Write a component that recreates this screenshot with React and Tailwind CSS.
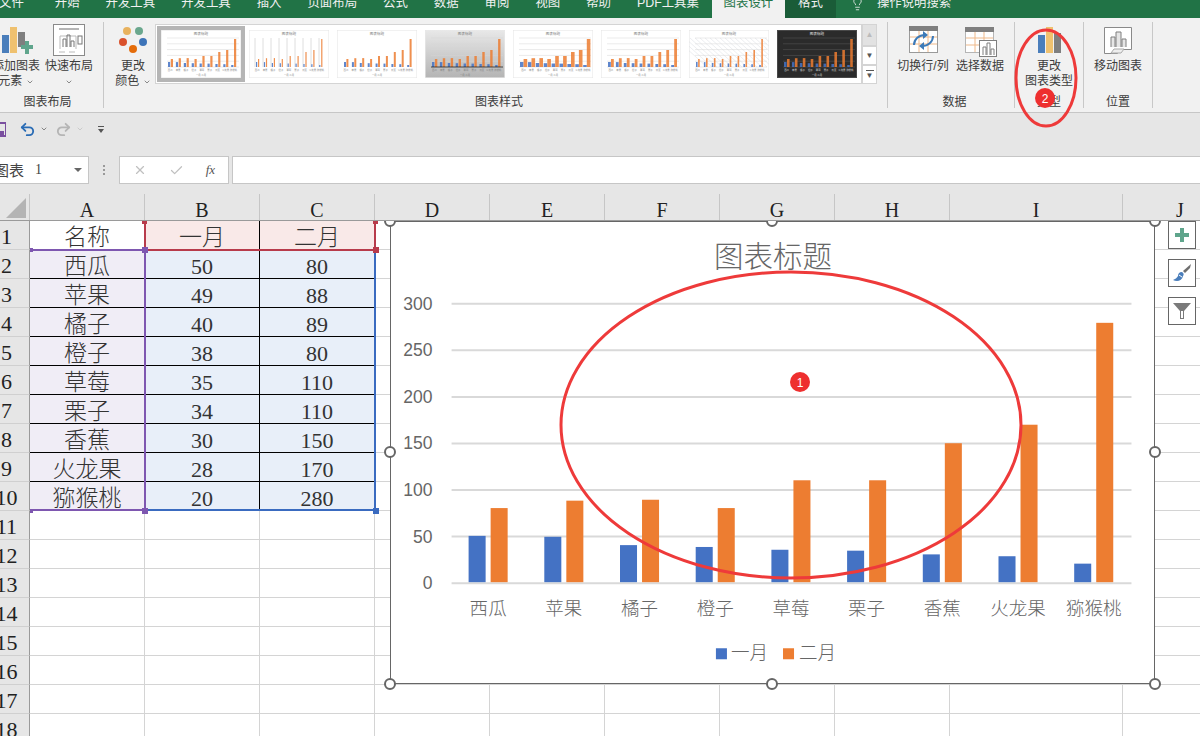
import React from 'react';
import { Lightbulb, Undo2, Redo2, X, Check, ChevronDown } from 'lucide-react';

const sans = "font-['Liberation_Sans','Noto_Sans_CJK_SC',sans-serif]";

const rows = [
  ['西瓜', 50, 80],
  ['苹果', 49, 88],
  ['橘子', 40, 89],
  ['橙子', 38, 80],
  ['草莓', 35, 110],
  ['栗子', 34, 110],
  ['香蕉', 30, 150],
  ['火龙果', 28, 170],
  ['猕猴桃', 20, 280],
];

const columns = [
  ['A', 115], ['B', 115], ['C', 115], ['D', 115], ['E', 115],
  ['F', 115], ['G', 115], ['H', 115], ['I', 173], ['J', 115],
];

const tabs = ['开始', '开发工具', '开发工具', '插入', '页面布局', '公式', '数据', '审阅', '视图', '帮助', 'PDF工具集'];

const thumbs = [
  { selected: true, bar: 2.2, pad: 0.6, grid: 'h' },
  { bar: 1.2, pad: 0.8, grid: 'v' },
  { bar: 2, pad: 0.4, grid: 'none' },
  { bar: 2.4, pad: 0.5, grid: 'h', bg: 'grey' },
  { bar: 3.6, pad: 0, grid: 'h' },
  { bar: 2.8, pad: 0.2, grid: 'h' },
  { bar: 1.6, pad: 0.5, grid: 'hatch' },
  { bar: 2.6, pad: 0.4, grid: 'h', bg: 'dark' },
];

const MiniChart = ({ selected, bar, pad, grid, bg, idx }) => {
  const dark = bg === 'dark';
  const text = dark ? '#e5e5e5' : '#7a7a7a';
  const line = dark ? '#5b5b5b' : '#d6d6d6';
  const fill = dark ? '#2b2b2b' : bg === 'grey' ? `url(#thumb-bg-${idx})` : '#ffffff';
  return (
    <div className={`h-[56px] w-[88px] shrink-0 border-4 ${selected ? 'border-[#b5b5b5]' : 'border-transparent'}`}>
      <svg viewBox="0 0 80 48" className="h-full w-full">
        <defs>
          <linearGradient id={`thumb-bg-${idx}`} x1="0" y1="0" x2="0" y2="1">
            <stop offset="0" stopColor="#e8e8e8" />
            <stop offset="1" stopColor="#b4b4b4" />
          </linearGradient>
        </defs>
        <rect x="0.25" y="0.25" width="79.5" height="47.5" fill={fill} stroke={dark ? '#333' : '#e4e4e4'} strokeWidth="0.5" />
        <text x="40" y="5" fontSize="3.6" textAnchor="middle" fill={text} className={sans}>图表标题</text>
        {grid === 'hatch' && (
          <g stroke="#cfd5dc" strokeWidth="0.4">
            {Array.from({ length: 20 }).map((_, i) => (
              <line key={i} x1={i * 5 - 14} y1="8" x2={i * 5 + 18} y2="37" />
            ))}
          </g>
        )}
        {(grid === 'h' || grid === 'hatch') && [8, 13.8, 19.6, 25.4, 31.2, 37].map((y) => (
          <line key={y} x1="6" x2="78" y1={y} y2={y} stroke={line} strokeWidth="0.5" />
        ))}
        {grid === 'v' && rows.map((_, i) => (
          <line key={i} x1={6 + i * 8} x2={6 + i * 8} y1="8" y2="37" stroke={line} strokeWidth="0.8" />
        ))}
        {rows.map((r, i) => {
          const x = 7 + i * 7.9;
          return (
            <g key={r[0]} opacity="0.85">
              <rect x={x} y={37 - r[1] * 0.1} width={bar} height={r[1] * 0.1} fill="#4472c4" />
              <rect x={x + bar + pad} y={37 - r[2] * 0.1} width={bar} height={r[2] * 0.1} fill="#ed7d31" />
              <text x={x + bar} y="41" fontSize="2.4" textAnchor="middle" fill={text} className={sans}>{r[0]}</text>
            </g>
          );
        })}
        {bg === 'grey' && <line x1="6" x2="78" y1="37" y2="37" stroke="#222" strokeWidth="0.8" />}
        <text x="40" y="46" fontSize="2.4" textAnchor="middle" fill={text} className={sans}>一月 二月</text>
      </svg>
    </div>
  );
};

const Caret = ({ className = '' }) => <ChevronDown size={8} strokeWidth={2} className={`inline-block text-[#555] ${className}`} />;

const AddElementIcon = () => (
  <svg width="36" height="36" viewBox="0 0 36 36">
    <rect x="4" y="13" width="7" height="18" fill="#4a7ebb" />
    <rect x="12" y="5" width="7" height="26" fill="#efc16f" />
    <rect x="20" y="10" width="7" height="15" fill="#7f7f7f" />
    <path d="M23 23h4v-4h4v4h4v4h-4v5h-4v-5h-4z" fill="#5fa58c" />
  </svg>
);

const QuickLayoutIcon = () => (
  <svg width="36" height="36" viewBox="0 0 36 36" fill="none">
    <rect x="2.5" y="2.5" width="31" height="31" fill="#fff" stroke="#8a8a8a" />
    <path d="M8 7h20" stroke="#b5b5b5" strokeWidth="2" />
    <path d="M9 27V14h16v13" stroke="#bbb" />
    <path d="M12 25v-8h3v8M16 25V13h3v12M20 25v-6h3v6" stroke="#777" />
    <rect x="27" y="14" width="4" height="8" stroke="#777" />
    <path d="M8 30h6M18 30h6" stroke="#bbb" />
  </svg>
);

const ColorIcon = () => (
  <svg width="36" height="36" viewBox="0 0 36 36">
    <circle cx="12" cy="9" r="4" fill="#e8b25e" />
    <circle cx="24" cy="9" r="4" fill="#6aa78d" />
    <circle cx="8" cy="20" r="4" fill="#d9512c" />
    <circle cx="28" cy="20" r="4" fill="#3d74b8" />
    <circle cx="18" cy="27" r="4" fill="#e46c0a" />
  </svg>
);

const SwitchIcon = () => (
  <svg width="36" height="36" viewBox="0 0 36 36" fill="none">
    <rect x="4.5" y="4.5" width="28" height="26" fill="#fff" stroke="#9a9a9a" />
    <rect x="4" y="4" width="29" height="5" fill="#7f7f7f" />
    <path d="M5 15h27M5 22h27M14 9v21M23 9v21" stroke="#efb98a" />
    <path d="M9 23c0-6 5-10 11-10" stroke="#3d7ab8" strokeWidth="2" />
    <path d="M18 9l5 4-5 4z" fill="#3d7ab8" />
    <path d="M28 14c0 6-5 10-11 10" stroke="#3d7ab8" strokeWidth="2" />
    <path d="M19 20l-5 4 5 4z" fill="#3d7ab8" />
  </svg>
);

const SelectDataIcon = () => (
  <svg width="36" height="36" viewBox="0 0 36 36" fill="none">
    <rect x="3.5" y="5.5" width="28" height="25" fill="#fff" stroke="#b5b5b5" />
    <rect x="3" y="5" width="29" height="5" fill="#7f7f7f" />
    <path d="M4 16h27M4 23h27M13 10v20M22 10v20" stroke="#efb98a" />
    <rect x="17.5" y="18.5" width="17" height="16" fill="#fff" stroke="#7f7f7f" />
    <path d="M21 33v-8h3v8M25 33V21h3v12M29 33v-6h3v6" stroke="#7f7f7f" />
  </svg>
);

const ChartTypeIcon = () => (
  <svg width="36" height="36" viewBox="0 0 36 36">
    <rect x="7" y="13" width="7" height="18" fill="#4a7ebb" />
    <rect x="15" y="5" width="7" height="26" fill="#efc16f" />
    <rect x="23" y="11" width="7" height="20" fill="#7f7f7f" />
  </svg>
);

const MoveIcon = () => (
  <svg width="36" height="36" viewBox="0 0 36 36" fill="none">
    <path d="M4.5 5.5h27v22h-10l-4 4h-13z" fill="#fff" stroke="#8a8a8a" />
    <path d="M11 25v-10h4v10M16 25V10h5v15M22 25v-8h4v8" stroke="#7f7f7f" fill="#e6e6e6" />
    <path d="M11 31l3-4h10l-3 4z" fill="#eee" stroke="#aaa" />
  </svg>
);

const RibbonButton = ({ icon, lines, width }) => (
  <div className={`flex shrink-0 flex-col items-center ${width}`}>
    <div className="flex h-[37px] items-start justify-center">{icon}</div>
    {lines.map((l, i) => (
      <div key={i} className="h-[15px] whitespace-nowrap text-[12px] leading-[15px] text-[#3c3c3c]">{l}</div>
    ))}
  </div>
);

const RibbonGroup = ({ label, className, children }) => (
  <div className={`flex h-[86px] shrink-0 flex-col border-r border-[#c8c8c8] ${className}`}>
    <div className="flex flex-1">{children}</div>
    <div className="h-[15px] text-center text-[12px] leading-[19px] text-[#3c3c3c]">{label}</div>
  </div>
);

const ScrollBtn = ({ className, children }) => (
  <div className={`flex w-[15px] items-center justify-center border border-[#d4d4d4] text-[8px] leading-none ${className}`}>{children}</div>
);

const Handle = ({ className }) => (
  <div className={`absolute h-[12px] w-[12px] -translate-x-1/2 -translate-y-1/2 rounded-full border-2 border-[#666] bg-white ${className}`} />
);

const SideButton = ({ children }) => (
  <div className="flex h-[28px] w-[28px] items-center justify-center border border-[#666] bg-white">{children}</div>
);

const Chart = () => {
  const grid = [[300, 304], [250, 350.5], [200, 397], [150, 443.5], [100, 490], [50, 536.5], [0, 583]];
  return (
    <svg viewBox="391.5 222.5 762 460" className={`block h-full w-full font-light ${sans}`}>
      <text x="773" y="267" fontSize="29.5" textAnchor="middle" fill="#666">图表标题</text>
      {grid.map(([v, y]) => (
        <g key={v}>
          <line x1="452" x2="1131" y1={y} y2={y} stroke="#d9d9d9" strokeWidth="2" />
          <text x="433" y={y + 6} fontSize="17.5" textAnchor="end" fill="#666">{v}</text>
        </g>
      ))}
      {rows.map((r, i) => {
        const x = 469 + i * 75.6;
        return (
          <g key={r[0]}>
            <rect x={x} y={582 - r[1] * 0.925} width="17" height={r[1] * 0.925} fill="#4472c4" />
            <rect x={x + 22} y={582 - r[2] * 0.925} width="17" height={r[2] * 0.925} fill="#ed7d31" />
            <text x={x + 19.5} y="615" fontSize="18.5" textAnchor="middle" fill="#666">{r[0]}</text>
          </g>
        );
      })}
      <rect x="716" y="648" width="11" height="11" fill="#4472c4" />
      <text x="731" y="659" fontSize="18.5" fill="#666">一月</text>
      <rect x="783" y="648" width="11" height="11" fill="#ed7d31" />
      <text x="799" y="659" fontSize="18.5" fill="#666">二月</text>
    </svg>
  );
};

const Cell = ({ r, c, width }) => {
  const data = r >= 2 && r <= 10 ? rows[r - 2] : null;
  let value = '';
  let bg = 'bg-white';
  let border = 'border-[#d4d4d4]';
  if (r === 1 && c < 3) {
    value = ['名称', '一月', '二月'][c];
    if (c > 0) bg = 'bg-[#f9e9e8]';
  } else if (data && c < 3) {
    value = data[c];
    bg = c === 0 ? 'bg-[#f0edf6]' : 'bg-[#e8eff9]';
  }
  if (c < 3 && r >= 1 && r <= 9) border = r === 1 ? 'border-b-[#d4d4d4] border-r-[#d4d4d4]' : 'border-b-black border-r-[#d4d4d4]';
  const blackRight = c === 1 && r <= 10 ? 'border-r-black' : '';
  const size = typeof value === 'string' ? 'text-[23px]' : 'text-[22px]';
  return (
    <div
      className={`flex h-[29px] shrink-0 items-end justify-center overflow-hidden border-r border-b font-light leading-[22px] text-[#333] ${size} ${bg} ${border} ${blackRight}`}
      style={{ width }}
    >
      {value}
    </div>
  );
};

const App = () => (
  <div className={`relative h-[736px] w-[1200px] overflow-hidden bg-[#e6e6e6] ${sans}`}>
    {/* tabs */}
    <div className="flex h-[18px] items-center overflow-hidden bg-[#217346] text-[12.4px] text-[#f1f1f1]">
      <div className="-ml-[1px] pr-[18px]"><span className="block -translate-y-[6px]">文件</span></div>
      {tabs.map((t, i) => (
        <div key={i} className="px-[13px]"><span className="block -translate-y-[6px] whitespace-nowrap">{t}</span></div>
      ))}
      <div className="flex h-full w-[73px] items-center justify-center bg-[#f1f1f1] text-[#217346]"><span className="block -translate-y-[6px]">图表设计</span></div>
      <div className="flex h-full w-[51px] items-center justify-center bg-[#1a5c38]"><span className="block -translate-y-[6px]">格式</span></div>
      <Lightbulb size={15} strokeWidth={1.3} className="ml-[14px] -translate-y-[6px]" />
      <span className="ml-[12px] block -translate-y-[6px]">操作说明搜索</span>
    </div>

    {/* ribbon */}
    <div className="flex h-[95px] items-start border-b border-[#c6c6c6] bg-[#f1f1f1] pt-[4px]">
      <RibbonGroup label="图表布局" className="-ml-[8px] w-[112px]">
        <div className="flex gap-[5px]">
          <RibbonButton width="w-[48px]" icon={<AddElementIcon />} lines={['添加图表', <span key="a">元素 <Caret /></span>]} />
          <RibbonButton width="w-[48px]" icon={<QuickLayoutIcon />} lines={['快速布局', <Caret key="b" />]} />
        </div>
      </RibbonGroup>
      <RibbonGroup label="图表样式" className="w-[784px] pl-[7px]">
        <RibbonButton width="w-[44px]" icon={<ColorIcon />} lines={['更改', <span key="c">颜色 <Caret /></span>]} />
        <div className="mt-[2px] flex h-[60px]">
          <div className="flex h-full w-[707px] items-center border border-[#d4d4d4] bg-white pl-[1px]">
            {thumbs.map((t, i) => <MiniChart key={i} idx={i} {...t} />)}
          </div>
          <div className="flex flex-col">
            <ScrollBtn className="h-[22px] bg-[#e2e2e2] text-[#bbb]">▲</ScrollBtn>
            <ScrollBtn className="h-[19px] bg-white text-[#555]">▼</ScrollBtn>
            <ScrollBtn className="h-[19px] bg-white text-[#555]">
              <div className="flex flex-col items-center gap-[1px]"><div className="h-px w-[8px] bg-[#555]" /><span>▼</span></div>
            </ScrollBtn>
          </div>
        </div>
      </RibbonGroup>
      <RibbonGroup label="数据" className="w-[127px] pl-[7px]">
        <div className="flex gap-[4px]">
          <RibbonButton width="w-[56px]" icon={<SwitchIcon />} lines={['切换行/列']} />
          <RibbonButton width="w-[50px]" icon={<SelectDataIcon />} lines={['选择数据']} />
        </div>
      </RibbonGroup>
      <RibbonGroup label="类型" className="w-[69px]">
        <RibbonButton width="w-full" icon={<ChartTypeIcon />} lines={['更改', '图表类型']} />
      </RibbonGroup>
      <RibbonGroup label="位置" className="w-[69px]">
        <RibbonButton width="w-full" icon={<MoveIcon />} lines={['移动图表']} />
      </RibbonGroup>
    </div>

    {/* quick access */}
    <div className="flex h-[43px] items-center bg-[#e6e6e6] pb-[11px]">
      <svg width="6" height="15" viewBox="0 0 6 15" className="shrink-0">
        <path d="M-8 1h14v13H-8z" fill="none" stroke="#7a4f9f" strokeWidth="2" />
        <rect x="0" y="9" width="4" height="5" fill="#7a4f9f" />
      </svg>
      <Undo2 size={17} strokeWidth={2.6} className="ml-[13px] text-[#2a6cb5]" />
      <Caret className="ml-[4px]" />
      <Redo2 size={17} strokeWidth={2.6} className="ml-[7px] text-[#b5b5b5]" />
      <Caret className="ml-[4px] text-[#bbb]" />
      <div className="ml-[14px] flex flex-col items-center gap-[2px]">
        <div className="h-px w-[6px] bg-[#555]" />
        <div className="h-0 w-0 border-x-[3px] border-t-[4px] border-x-transparent border-t-[#555]" />
      </div>
    </div>

    {/* formula bar */}
    <div className="flex h-[28px] items-stretch bg-[#e6e6e6]">
      <div className="flex w-[89px] items-center border border-l-0 border-[#c6c6c6] bg-white text-[15px] leading-none text-[#444]">
        <span className="-ml-[6px] whitespace-nowrap">图表</span>
        <span className="ml-[11px] font-['Liberation_Serif',serif] text-[14px]">1</span>
        <div className="ml-auto mr-[6px] h-0 w-0 border-x-[4px] border-t-[4px] border-x-transparent border-t-[#666]" />
      </div>
      <div className="flex w-[30px] flex-col items-center justify-center gap-[2px]">
        <div className="h-[2px] w-[2px] bg-[#999]" />
        <div className="h-[2px] w-[2px] bg-[#999]" />
        <div className="h-[2px] w-[2px] bg-[#999]" />
      </div>
      <div className="flex w-[110px] items-center justify-around border border-[#c6c6c6] bg-white px-[2px]">
        <X size={14} className="text-[#c0c0c0]" />
        <Check size={15} className="text-[#c0c0c0]" />
        <span className="font-['Liberation_Serif',serif] text-[13px] italic text-[#555]">fx</span>
      </div>
      <div className="ml-[3px] flex-1 border border-r-0 border-[#c6c6c6] bg-white" />
    </div>

    {/* column headers */}
    <div className="mt-[10px] flex h-[27px] overflow-hidden border-b border-[#9a9a9a] bg-[#e6e6e6] font-['Liberation_Serif',serif] text-[20px] leading-[32px] text-[#222]">
      <div className="relative w-[30px] shrink-0 border-r border-[#c6c6c6]">
        <div className="absolute bottom-[2px] right-[3px] h-0 w-0 border-b-[20px] border-l-[20px] border-b-[#b4b4b4] border-l-transparent" />
      </div>
      {columns.map(([name, w]) => (
        <div key={name} className="shrink-0 border-r border-[#c6c6c6] text-center" style={{ width: w }}>{name}</div>
      ))}
    </div>

    {/* sheet */}
    <div className="relative h-[515px] overflow-hidden bg-white font-['Liberation_Serif','Noto_Sans_CJK_SC',serif]">
      {Array.from({ length: 18 }).map((_, i) => (
        <div key={i} className="flex">
          <div className="flex h-[29px] w-[30px] shrink-0 items-end justify-center overflow-hidden border-r border-b border-r-[#9a9a9a] border-b-[#d0d0d0] bg-[#e6e6e6] pr-[16px] text-[22px] leading-[24px] text-[#222]">
            {i + 1}
          </div>
          {columns.map(([name, w], c) => (
            <Cell key={name} r={i + 1} c={c} width={w} />
          ))}
        </div>
      ))}

      {/* selection ranges */}
      <div className="absolute left-[144px] top-0 h-[30px] w-[232px] border-x-2 border-b-2 border-[#b83b4b]" />
      <div className="absolute left-[30px] top-[28px] h-[262px] w-[116px] border-y-2 border-r-2 border-[#7e57b0]" />
      <div className="absolute left-[146px] top-[29px] h-[261px] w-[230px] border-r-2 border-b-2 border-[#3a6bc0]" />
      <div className="absolute left-[142px] top-[26px] h-[6px] w-[6px] bg-[#7e57b0]" />
      <div className="absolute left-[373px] top-[26px] h-[6px] w-[6px] bg-[#b83b4b]" />
      <div className="absolute left-[142px] top-[287px] h-[6px] w-[6px] bg-[#7e57b0]" />
      <div className="absolute left-[373px] top-[287px] h-[6px] w-[6px] bg-[#3a6bc0]" />
      <div className="absolute left-[30px] top-[27px] h-[4px] w-[3px] bg-[#7e57b0]" />
      <div className="absolute left-[30px] top-[288px] h-[4px] w-[3px] bg-[#7e57b0]" />
      <div className="absolute left-[142px] top-0 h-[3px] w-[5px] bg-[#b83b4b]" />
      <div className="absolute left-[373px] top-0 h-[3px] w-[5px] bg-[#b83b4b]" />

      {/* chart */}
      <div className={`absolute left-[390px] top-0 h-[463px] w-[765px] border-[1.5px] border-[#666] bg-white ${sans}`}>
        <Chart />
      </div>
      <Handle className="left-[390px] top-0" />
      <Handle className="left-[772px] top-0" />
      <Handle className="left-[1155px] top-0" />
      <Handle className="left-[390px] top-[231px]" />
      <Handle className="left-[1155px] top-[231px]" />
      <Handle className="left-[390px] top-[463px]" />
      <Handle className="left-[772px] top-[463px]" />
      <Handle className="left-[1155px] top-[463px]" />

      <div className="absolute left-[1168px] top-0 flex flex-col gap-[10px]">
        <SideButton>
          <svg width="16" height="16" viewBox="0 0 16 16"><path d="M6 1h4v5h5v4h-5v5H6v-5H1V6h5z" fill="#5fa58c" /></svg>
        </SideButton>
        <SideButton>
          <svg width="20" height="20" viewBox="0 0 20 20">
            <path d="M19 1l-8 7 2 2 5-5z" fill="#6f6f6f" />
            <path d="M10 9c-3 0-4 2-4 4-1 2-3 3-5 4 4 2 9 1 10-4 1-1 1-3-1-4z" fill="#4a7ebb" />
            <path d="M7 12l3 2" stroke="#fff" strokeWidth="1" />
          </svg>
        </SideButton>
        <SideButton>
          <svg width="20" height="20" viewBox="0 0 20 20">
            <path d="M1 2h18l-7 8v8H8v-8z" fill="#7a7a7a" />
            <path d="M9 10v7h2v-7z" fill="#fff" />
          </svg>
        </SideButton>
      </div>
    </div>

    {/* annotations */}
    <svg viewBox="0 0 1200 736" className="pointer-events-none absolute inset-0 h-full w-full">
      <ellipse cx="791" cy="425" rx="230" ry="153" fill="none" stroke="#ee3a3a" strokeWidth="3" />
      <ellipse cx="1046" cy="78" rx="30" ry="48" fill="none" stroke="#ee3a3a" strokeWidth="3" />
      <circle cx="800" cy="382" r="10" fill="#ee2f2f" />
      <text x="800" y="386.5" fontSize="12" textAnchor="middle" fill="#fff">1</text>
      <circle cx="1045" cy="98" r="10" fill="#ee2f2f" />
      <text x="1045" y="102.5" fontSize="12" textAnchor="middle" fill="#fff">2</text>
    </svg>
  </div>
);

export default App;
